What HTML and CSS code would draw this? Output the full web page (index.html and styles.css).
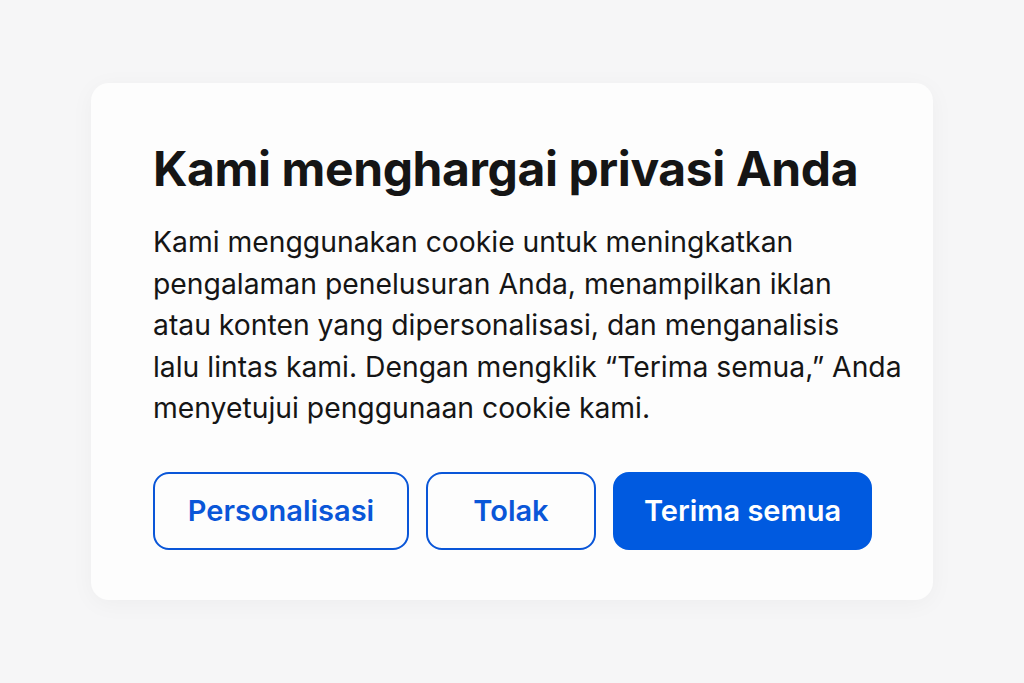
FILE: index.html
```html
<!DOCTYPE html>
<html lang="id">
<head>
    <meta charset="UTF-8">
    <meta name="viewport" content="width=device-width, initial-scale=1.0">
    <title>Privasi</title>
    <link rel="stylesheet" href="styles.css">
</head>
<body>
    <div class="card">
        <h1>Kami menghargai privasi Anda</h1>
        <p class="text">
            Kami menggunakan cookie untuk meningkatkan<br>
            pengalaman penelusuran Anda, menampilkan iklan<br>
            atau konten yang dipersonalisasi, dan menganalisis<br>
            lalu lintas kami. Dengan mengklik “Terima semua,” Anda<br>
            menyetujui penggunaan cookie kami.
        </p>
        <div class="buttons">
            <button class="btn btn-outline btn-custom">Personalisasi</button>
            <button class="btn btn-outline btn-reject">Tolak</button>
            <button class="btn btn-primary">Terima semua</button>
        </div>
    </div>
</body>
</html>
```

FILE: styles.css
```css
body {
    font-family: Inter, "Noto Sans", sans-serif;
    background: #f6f6f7;
    color: #151515;
    margin: 0;
    padding: 83px 91px;
}
.card {
    width: 842px;
    height: 517px;
    box-sizing: border-box;
    padding: 56px 24px 56px 62px;
    background: #fdfdfd;
    border-radius: 18px;
    box-shadow: 0 4px 24px rgba(0, 0, 0, 0.04);
}
h1 {
    font-size: 48px;
    font-weight: 700;
    margin: 0 0 24px;
    letter-spacing: -0.4px;
}
.text {
    font-size: 28.3px;
    line-height: 41.5px;
    margin: 0 0 42px;
    white-space: nowrap;
}
.buttons {
    display: flex;
    gap: 17px;
}
.btn {
    font-family: Inter, "Noto Sans", sans-serif;
    font-size: 29px;
    font-weight: 600;
    height: 78px;
    border-radius: 16px;
    border: 2px solid #0a56d8;
    padding: 0;
    cursor: pointer;
}
.btn-outline {
    background: #fdfdfd;
    color: #0a56d8;
}
.btn-custom {
    width: 256px;
}
.btn-reject {
    width: 170px;
}
.btn-primary {
    width: 259px;
    background: #005ae0;
    border-color: #005ae0;
    color: #fff;
}
```
